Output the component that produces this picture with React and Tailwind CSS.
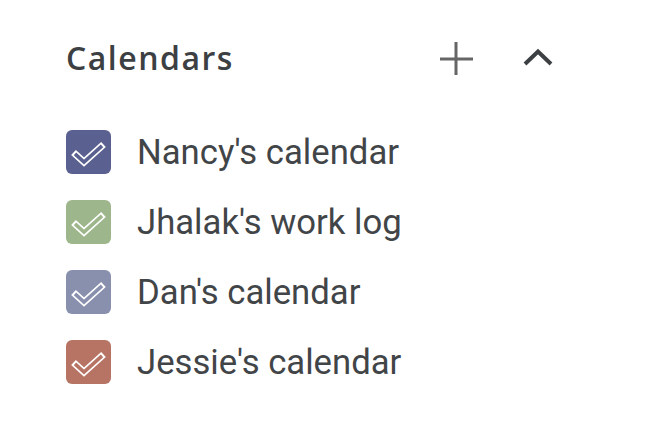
const calendars = [
  { name: "Nancy's calendar", color: 'bg-[#5a6190]', stroke: '#5a6190' },
  { name: "Jhalak's work log", color: 'bg-[#9db68b]', stroke: '#9db68b' },
  { name: "Dan's calendar", color: 'bg-[#8890ad]', stroke: '#8890ad' },
  { name: "Jessie's calendar", color: 'bg-[#b77464]', stroke: '#b77464' }
];

// outlined tick: wide white stroke with a narrower fill-coloured stroke on top
const CheckBox = ({ color, stroke }) => (
  <div className={`w-[45px] h-[44px] rounded-[6px] flex items-center justify-center ${color}`}>
    <svg width="45" height="44" viewBox="0 0 45 44">
      <path d="M7.5 22.5 L18 32 L37.5 14.5" fill="none" stroke="#fff" strokeWidth="7" strokeLinejoin="miter" />
      <path d="M9 23.8 L18 32 L36 15.8" fill="none" stroke={stroke} strokeWidth="3.6" strokeLinejoin="miter" />
    </svg>
  </div>
);

export default function App() {
  return (
    <div className="w-[650px] h-[436px] bg-white pl-[66px] pt-[38px]">
      <div className="flex items-center w-[478px] h-[40px]">
        <h2
          className="text-[32px] font-[550] text-[#3c4043] flex-1 tracking-[1.5px]"
          style={{ fontFamily: '"Open Sans", "Noto Sans", sans-serif' }}
        >
          Calendars
        </h2>
        <button type="button" className="w-[40px] h-[40px] flex items-center justify-center mr-[42px]">
          <svg width="36" height="36" viewBox="0 0 36 36">
            <path d="M18 2 V35 M2 19 H35" stroke="#666" strokeWidth="3" />
          </svg>
        </button>
        <button type="button" className="w-[40px] h-[40px] flex items-center justify-center mr-[-14px]">
          <svg width="32" height="20" viewBox="0 0 32 20">
            <path d="M3 16 L16 3.5 L29 16" fill="none" stroke="#3c4043" strokeWidth="4" />
          </svg>
        </button>
      </div>

      <ul className="mt-[52px] flex flex-col gap-[26px]">
        {calendars.map((cal) => (
          <li key={cal.name} className="flex items-center gap-[26px] h-[44px]">
            <CheckBox color={cal.color} stroke={cal.stroke} />
            <span
              className="text-[34.7px] text-[#424548] leading-none"
              style={{ fontFamily: 'Roboto, "Liberation Sans", sans-serif' }}
            >
              {cal.name}
            </span>
          </li>
        ))}
      </ul>
    </div>
  );
}
